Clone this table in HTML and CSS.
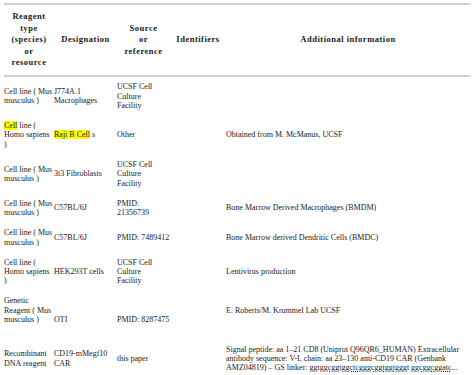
FILE: index.html
```html
<!DOCTYPE html>
<html lang="en">
<head>
  <meta charset="UTF-8">
  <title>Key resources table</title>
  <link rel="stylesheet" href="styles.css">
</head>
<body>
  <table class="resources">
    <colgroup>
      <col class="c-type">
      <col class="c-name">
      <col class="c-source">
      <col class="c-ids">
      <col class="c-info">
    </colgroup>
    <thead>
      <tr>
        <th>Reagent<br>type<br>(species)<br>or<br>resource</th>
        <th>Designation</th>
        <th>Source<br>or<br>reference</th>
        <th>Identifiers</th>
        <th>Additional information</th>
      </tr>
    </thead>
    <tbody>
      <tr>
        <td>Cell line ( Mus<br>musculus )</td>
        <td>J774A.1<br>Macrophages</td>
        <td>UCSF Cell<br>Culture<br>Facility</td>
        <td></td>
        <td></td>
      </tr>
      <tr>
        <td><mark>Cell</mark> line (<br>Homo sapiens<br>)</td>
        <td><mark>Raji B Cell</mark> s</td>
        <td>Other</td>
        <td></td>
        <td>Obtained from M. McManus, UCSF</td>
      </tr>
      <tr>
        <td>Cell line ( Mus<br>musculus )</td>
        <td>3t3 Fibroblasts</td>
        <td>UCSF Cell<br>Culture<br>Facility</td>
        <td></td>
        <td></td>
      </tr>
      <tr>
        <td>Cell line ( Mus<br>musculus )</td>
        <td>C57BL/6J</td>
        <td>PMID:<br>21356739</td>
        <td></td>
        <td>Bone Marrow Derived Macrophages (BMDM)</td>
      </tr>
      <tr>
        <td>Cell line ( Mus<br>musculus )</td>
        <td>C57BL/6J</td>
        <td>PMID: 7489412</td>
        <td></td>
        <td>Bone Marrow derived Dendritic Cells (BMDC)</td>
      </tr>
      <tr>
        <td>Cell line (<br>Homo sapiens<br>)</td>
        <td>HEK293T cells</td>
        <td>UCSF Cell<br>Culture<br>Facility</td>
        <td></td>
        <td>Lentivirus production</td>
      </tr>
      <tr class="tall">
        <td>Genetic<br>Reagent ( Mus<br>musculus )</td>
        <td class="low">OTI</td>
        <td class="low">PMID: 8287475</td>
        <td></td>
        <td>E. Roberts/M. Krummel Lab UCSF</td>
      </tr>
      <tr>
        <td>Recombinant<br>DNA reagent</td>
        <td>CD19-mMegf10<br>CAR</td>
        <td>this paper</td>
        <td></td>
        <td>Signal peptide: aa 1–21 CD8 (Uniprot Q96QR6_HUMAN) Extracellular<br>antibody sequence: V-L chain: aa 23–130 anti-CD19 CAR (Genbank<br>AMZ04819) – GS linker: <span class="seq">ggtggcggtggctcgggcggtggtgggt</span> <span class="seq">ggcggcggatc</span>...</td>
      </tr>
    </tbody>
  </table>
</body>
</html>
```

FILE: styles.css
```css
* {
  box-sizing: border-box;
}

body {
  margin: 0;
  padding: 3px 4px;
  background-color: #ffffff;
  color: #1a1a1a;
  font-family: "Liberation Serif", "Times New Roman", serif;
}

/* Table */
.resources {
  width: 466px;
  border-collapse: collapse;
  table-layout: fixed;
  border-top: 2px solid #cfcfcf;
  border-bottom: 2px solid #cfcfcf;
}

.c-type { width: 50px; }
.c-name { width: 63px; }
.c-source { width: 53px; }
.c-ids { width: 56px; }
.c-info { width: 244px; }

.resources th {
  font-size: 8.5px;
  font-weight: bold;
  letter-spacing: 0.5px;
  line-height: 11.6px;
  text-align: center;
  vertical-align: middle;
  padding: 6px 0;
  border-bottom: 2px solid #cfcfcf;
}

.resources td {
  font-size: 8px;
  line-height: 9.4px;
  text-align: left;
  vertical-align: middle;
  padding: 5.3px 0;
  white-space: nowrap;
}

.resources tr.tall td {
  padding-bottom: 14.7px;
}

.resources td.low {
  vertical-align: bottom;
}

mark {
  background-color: #ffff00;
  color: #1a1a1a;
}

.seq {
  text-decoration: underline dotted;
}
```
